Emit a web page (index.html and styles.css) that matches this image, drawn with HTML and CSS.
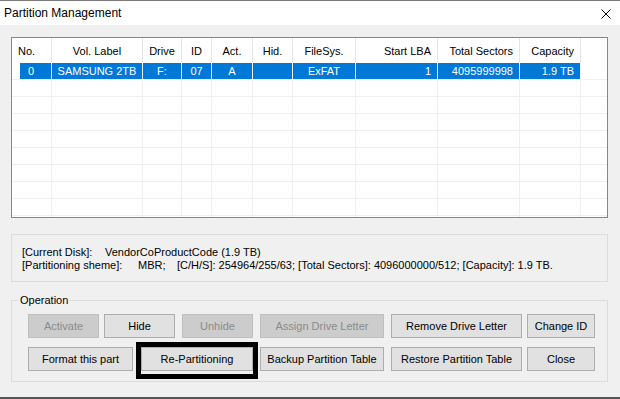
FILE: index.html
```html
<!DOCTYPE html>
<html>
<head>
<meta charset="utf-8">
<title>Partition Management</title>
<link rel="stylesheet" href="styles.css">
</head>
<body>
<div class="window">
  <div class="titlebar">
    <span class="title">Partition Management</span>
    <svg class="close" width="10" height="10" viewBox="0 0 10 10"><path d="M0.5 0.5 L9.5 9.5 M9.5 0.5 L0.5 9.5" stroke="#000" stroke-width="1" fill="none"/></svg>
  </div>
  <div class="content">
    <div class="listview">
      <div class="lv-row lv-head">
        <div class="cell l">No.</div>
        <div class="cell c">Vol. Label</div>
        <div class="cell c">Drive</div>
        <div class="cell c">ID</div>
        <div class="cell c">Act.</div>
        <div class="cell c">Hid.</div>
        <div class="cell c">FileSys.</div>
        <div class="cell r">Start LBA</div>
        <div class="cell r">Total Sectors</div>
        <div class="cell r">Capacity</div>
        <div class="cell filler"></div>
      </div>
      <div class="lv-row selected">
        <div class="cell first">0</div>
        <div class="cell c">SAMSUNG 2TB</div>
        <div class="cell c">F:</div>
        <div class="cell c">07</div>
        <div class="cell c">A</div>
        <div class="cell c"></div>
        <div class="cell c">ExFAT</div>
        <div class="cell r">1</div>
        <div class="cell r">4095999998</div>
        <div class="cell r">1.9 TB</div>
        <div class="cell filler"></div>
      </div>
      <div class="lv-row"><div class="cell"></div><div class="cell"></div><div class="cell"></div><div class="cell"></div><div class="cell"></div><div class="cell"></div><div class="cell"></div><div class="cell"></div><div class="cell"></div><div class="cell"></div><div class="cell filler"></div></div>
      <div class="lv-row"><div class="cell"></div><div class="cell"></div><div class="cell"></div><div class="cell"></div><div class="cell"></div><div class="cell"></div><div class="cell"></div><div class="cell"></div><div class="cell"></div><div class="cell"></div><div class="cell filler"></div></div>
      <div class="lv-row"><div class="cell"></div><div class="cell"></div><div class="cell"></div><div class="cell"></div><div class="cell"></div><div class="cell"></div><div class="cell"></div><div class="cell"></div><div class="cell"></div><div class="cell"></div><div class="cell filler"></div></div>
      <div class="lv-row"><div class="cell"></div><div class="cell"></div><div class="cell"></div><div class="cell"></div><div class="cell"></div><div class="cell"></div><div class="cell"></div><div class="cell"></div><div class="cell"></div><div class="cell"></div><div class="cell filler"></div></div>
      <div class="lv-row"><div class="cell"></div><div class="cell"></div><div class="cell"></div><div class="cell"></div><div class="cell"></div><div class="cell"></div><div class="cell"></div><div class="cell"></div><div class="cell"></div><div class="cell"></div><div class="cell filler"></div></div>
      <div class="lv-row"><div class="cell"></div><div class="cell"></div><div class="cell"></div><div class="cell"></div><div class="cell"></div><div class="cell"></div><div class="cell"></div><div class="cell"></div><div class="cell"></div><div class="cell"></div><div class="cell filler"></div></div>
      <div class="lv-row"><div class="cell"></div><div class="cell"></div><div class="cell"></div><div class="cell"></div><div class="cell"></div><div class="cell"></div><div class="cell"></div><div class="cell"></div><div class="cell"></div><div class="cell"></div><div class="cell filler"></div></div>
      <div class="lv-row"><div class="cell"></div><div class="cell"></div><div class="cell"></div><div class="cell"></div><div class="cell"></div><div class="cell"></div><div class="cell"></div><div class="cell"></div><div class="cell"></div><div class="cell"></div><div class="cell filler"></div></div>
      <div class="lv-row"><div class="cell"></div><div class="cell"></div><div class="cell"></div><div class="cell"></div><div class="cell"></div><div class="cell"></div><div class="cell"></div><div class="cell"></div><div class="cell"></div><div class="cell"></div><div class="cell filler"></div></div>
    </div>

    <div class="info">
      <div class="info-line"><span class="k1">[Current Disk]:</span><span>VendorCoProductCode (1.9 TB)</span></div>
      <div class="info-line"><span class="k2">[Partitioning sheme]:</span><span class="mbr">MBR;</span><span>[C/H/S]: 254964/255/63; [Total Sectors]: 4096000000/512; [Capacity]: 1.9 TB.</span></div>
    </div>

    <fieldset class="group">
      <legend>Operation</legend>
      <div class="btn-row">
        <button class="btn b-sm" disabled>Activate</button>
        <button class="btn b-sm g5">Hide</button>
        <button class="btn b-sm g7" disabled>Unhide</button>
        <button class="btn b-drv g7" disabled>Assign Drive Letter</button>
        <button class="btn b-wide g7">Remove Drive Letter</button>
        <button class="btn b-id g5">Change ID</button>
      </div>
      <div class="btn-row row2">
        <button class="btn b-fmt">Format this part</button>
        <button class="btn b-rep g8 highlight">Re-Partitioning</button>
        <button class="btn b-drv g7">Backup Partition Table</button>
        <button class="btn b-wide g7">Restore Partition Table</button>
        <button class="btn b-id g5">Close</button>
      </div>
    </fieldset>
  </div>
</div>
</body>
</html>
```

FILE: styles.css
```css
html, body {
  margin: 0;
  padding: 0;
}
body {
  width: 620px;
  height: 399px;
  overflow: hidden;
  background: #f0f0f0;
  font-family: "Liberation Sans", Arial, sans-serif;
  font-size: 11px;
  color: #000;
}
.window {
  height: 399px;
  box-sizing: border-box;
  border-top: 1px solid #7a7a7a;
  border-bottom: 2px solid #555555;
}
.titlebar {
  height: 24px;
  background: #ffffff;
  display: flex;
  align-items: center;
  justify-content: space-between;
  padding: 0 9px 0 4px;
}
.title {
  font-size: 12px;
  line-height: 16px;
}
.close {
  display: block;
  margin-top: 1px;
}
.content {
  padding: 12px 12px 0 11px;
}

/* list view */
.listview {
  height: 181px;
  box-sizing: border-box;
  border: 1px solid #828790;
  background: #ffffff;
  overflow: hidden;
}
.lv-row {
  display: grid;
  grid-template-columns: 40px 91px 39px 30px 41px 40px 63px 82px 82px 61px 1fr;
  height: 17px;
  box-sizing: border-box;
  border-bottom: 1px solid #f0f0f0;
}
.cell {
  box-sizing: border-box;
  border-right: 1px solid #f0f0f0;
  line-height: 16px;
  white-space: nowrap;
  overflow: hidden;
}
.cell.filler {
  border-right: none;
}
.lv-head {
  height: 25px;
  border-bottom: none;
}
.lv-head .cell {
  line-height: 26px;
  border-right-color: #e5e5e5;
}
.lv-head .cell.filler {
  border-right: none;
}
.c { text-align: center; }
.r { text-align: right; padding-right: 6px; }
.l { padding-left: 6px; }

.selected .cell {
  background: #0078d7;
  color: #ffffff;
}
.selected .cell.first {
  background: linear-gradient(to right, #ffffff 8px, #0078d7 8px);
  padding-left: 16px;
}
.selected .cell.filler {
  background: #ffffff;
}

/* info box */
.info {
  margin-top: 16px;
  height: 48px;
  box-sizing: border-box;
  border: 1px solid #dcdcdc;
  padding: 11px 0 0 10px;
}
.info-line {
  line-height: 13px;
  white-space: nowrap;
}
.k1 { display: inline-block; width: 83px; }
.k2 { display: inline-block; width: 116px; }
.mbr { display: inline-block; width: 39px; }

/* group box */
.group {
  margin: 12px 0 0 0;
  padding: 7px 0 10px 16px;
  border: 1px solid #dcdcdc;
  min-inline-size: 0;
}
.group legend {
  padding: 0 2px;
  margin-left: -10px;
  line-height: 13px;
  font-size: 11px;
}
.btn-row {
  display: flex;
}
.row2 {
  margin-top: 9px;
}
.btn {
  height: 24px;
  box-sizing: border-box;
  margin: 0;
  padding: 0;
  border: 1px solid #adadad;
  background: #e1e1e1;
  font-family: inherit;
  font-size: 11px;
  color: #000;
  border-radius: 0;
  white-space: nowrap;
}
.btn:disabled {
  background: #cccccc;
  border-color: #bfbfbf;
  color: #8b8b8b;
}
.b-sm { width: 71px; }
.b-fmt { width: 105px; }
.b-rep { width: 112px; }
.b-drv { width: 124px; }
.b-wide { width: 131px; }
.b-id { width: 68px; }
.g5 { margin-left: 5px; }
.g7 { margin-left: 7px; }
.g8 { margin-left: 8px; }

.highlight {
  position: relative;
  overflow: visible;
}
.highlight::after {
  content: "";
  position: absolute;
  left: -6px;
  top: -6px;
  right: -6px;
  bottom: -9px;
  border: 5px solid #000;
}
```
